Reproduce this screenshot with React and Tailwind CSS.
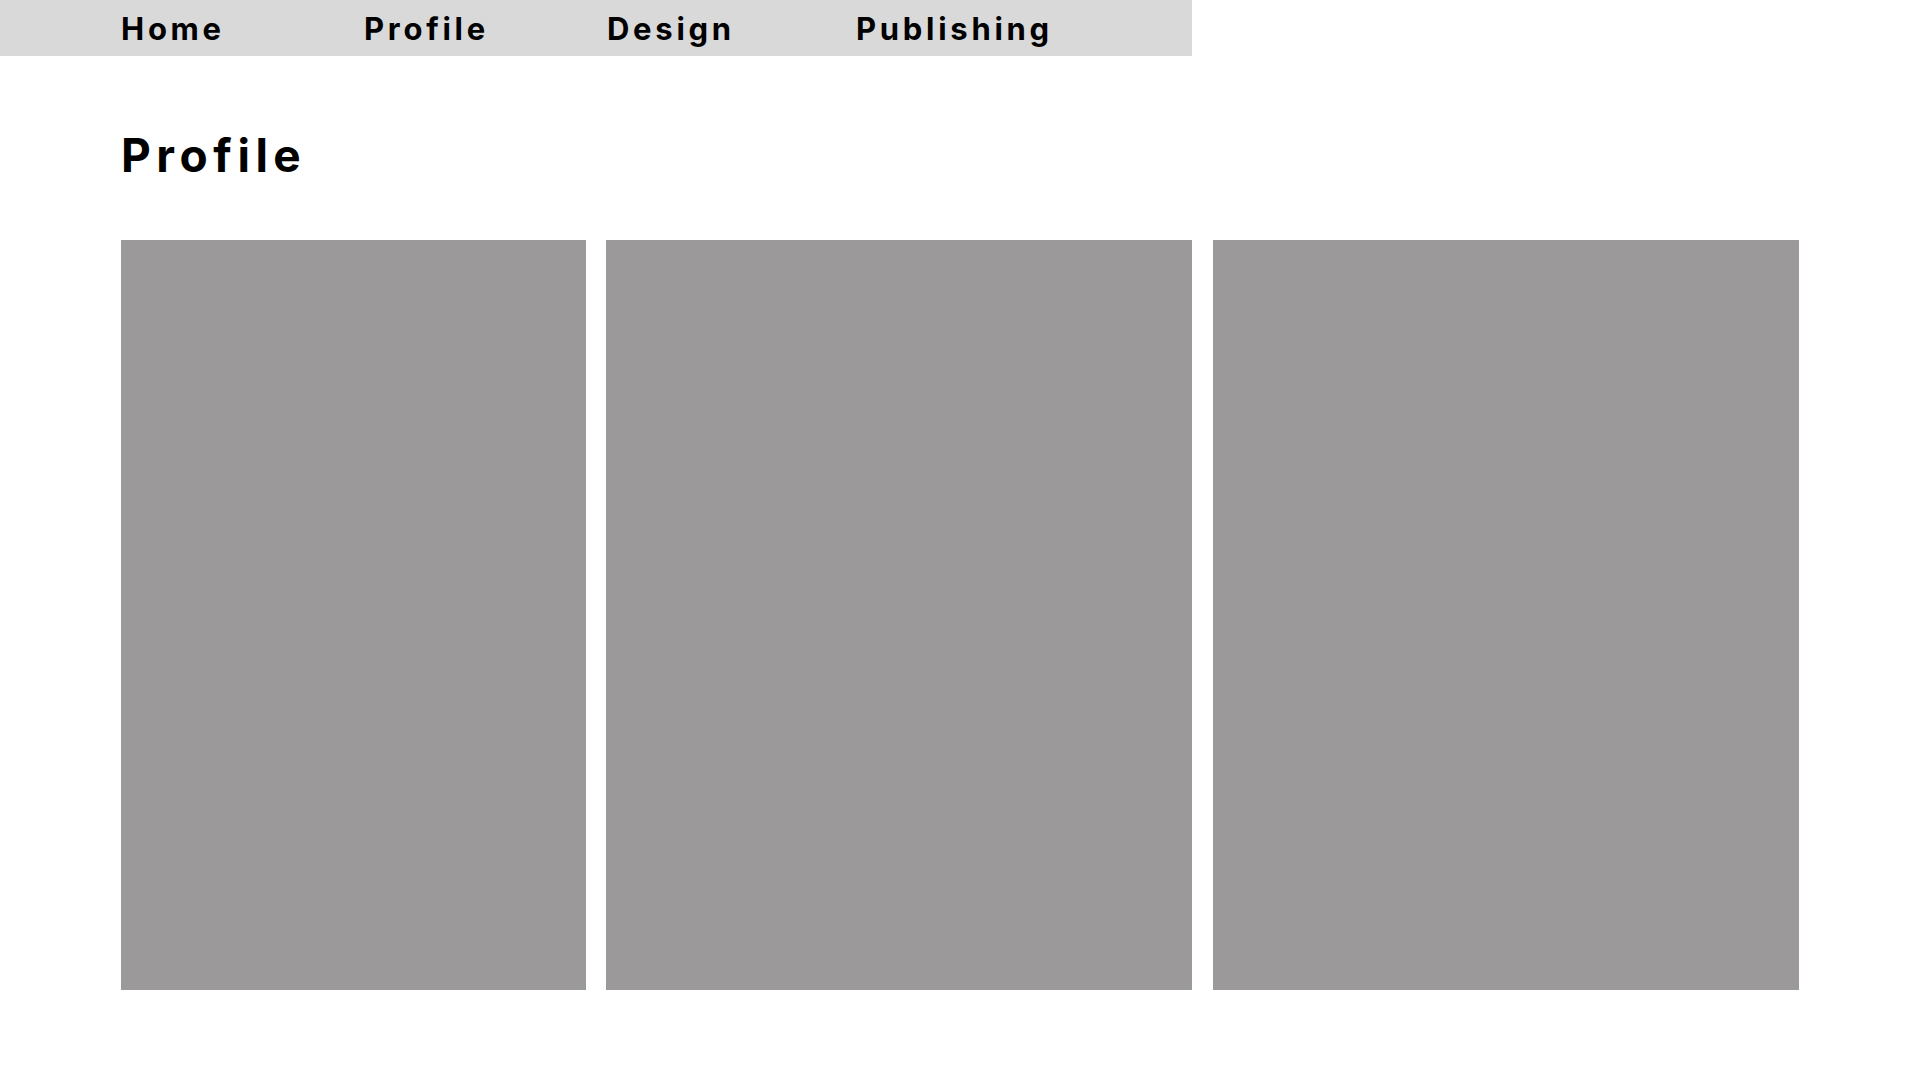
export default function App() {
  const tabs = [
    { label: 'Home', w: 'w-[243px]' },
    { label: 'Profile', w: 'w-[243px]' },
    { label: 'Design', w: 'w-[249px]' },
    { label: 'Publishing', w: 'w-auto' },
  ];

  return (
    <div className="min-h-screen bg-white font-['Inter',sans-serif] text-black">
      <nav className="flex h-[56px] w-[1192px] items-center bg-[#d9d9d9] pl-[121px]">
        {tabs.map((t) => (
          <a key={t.label} className={`${t.w} text-[31px] font-bold leading-none tracking-[0.12em]`}>
            {t.label}
          </a>
        ))}
      </nav>

      <div className="pl-[121px] pr-[121px]">
        <h1 className="mt-[76px] h-[46px] text-[46px] font-bold leading-none tracking-[0.12em]">Profile</h1>

        <div className="mt-[62px] flex gap-[20px]">
          <div className="h-[750px] w-[465px] bg-[#9b9999]" />
          <div className="h-[750px] w-[586px] bg-[#9b9999]" />
          <div className="ml-[1px] h-[750px] w-[586px] bg-[#9b9999]" />
        </div>
      </div>
    </div>
  );
}
